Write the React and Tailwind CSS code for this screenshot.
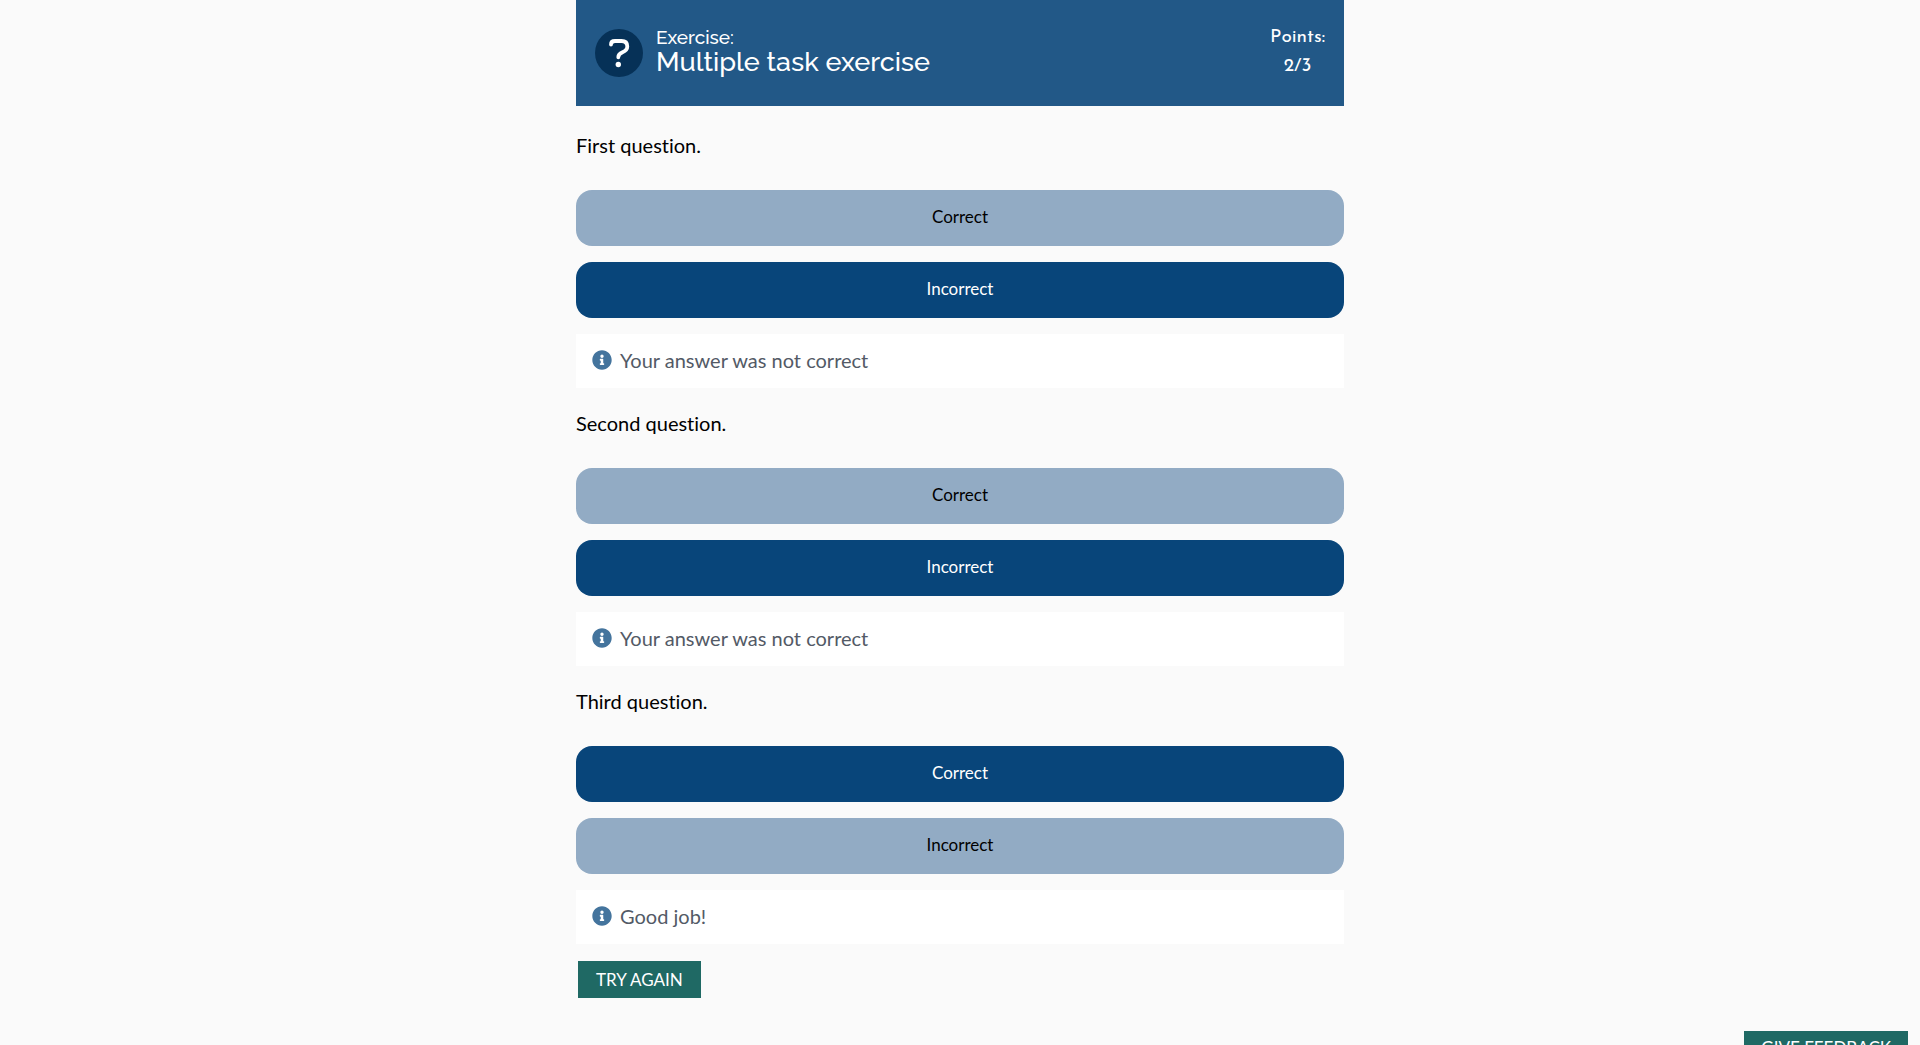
import { useState } from "react";
import { FaInfoCircle } from "react-icons/fa";

const questions = [
  { title: "First question.", chosen: "Incorrect", feedback: "Your answer was not correct" },
  { title: "Second question.", chosen: "Incorrect", feedback: "Your answer was not correct" },
  { title: "Third question.", chosen: "Correct", feedback: "Good job!" },
];

function QuestionMark() {
  return (
    <svg className="size-12 shrink-0" viewBox="0 0 48 48" aria-hidden="true">
      <circle cx="24" cy="24" r="24" fill="#063157" />
      <path
        d="M16 15.5C16 13 17.5 12 20 12H26.5C30.5 12 32.300 14.300 32.300 17.500C32.300 20.500 30.500 22 27.500 23.300C24.600 24.500 23.300 25.500 23.300 28.300"
        fill="none"
        stroke="#fff"
        strokeWidth="3.800"
        strokeLinecap="round"
      />
      <circle cx="23.300" cy="35.500" r="2.700" fill="#fff" />
    </svg>
  );
}

function Option({ label, selected, onSelect }) {
  return (
    <button
      type="button"
      aria-pressed={selected}
      onClick={onSelect}
      className={
        selected
          ? "h-14 w-full rounded-2xl bg-[#08457a] pb-0.5 text-[17px] text-white"
          : "h-14 w-full rounded-2xl bg-[#92abc4] pb-0.5 text-[17px] text-black"
      }
    >
      {label}
    </button>
  );
}

function Question({ title, chosen, feedback }) {
  const [selected, setSelected] = useState(chosen);
  return (
    <section className="pt-[19px]">
      <h2 className="mb-[29px] text-xl leading-8 text-black">{title}</h2>
      <div className="flex flex-col gap-4">
        {["Correct", "Incorrect"].map((label) => (
          <Option
            key={label}
            label={label}
            selected={selected === label}
            onSelect={() => setSelected(label)}
          />
        ))}
        <div className="flex items-center gap-2 bg-white px-4 py-3 text-xl leading-7 text-[#535a66]">
          <FaInfoCircle className="mb-0.5 size-5 text-[#44749d]" aria-hidden="true" />
          <p className="pb-0.5">{feedback}</p>
        </div>
      </div>
    </section>
  );
}

export default function App() {
  return (
    <div className="min-h-screen bg-[#fafafa] font-['Lato',sans-serif] [font-variant-ligatures:none]">
      <main className="mx-auto max-w-3xl">
        <header className="mb-1 flex items-center gap-[13px] bg-[#225887] px-[19px] py-[23px] text-white">
          <QuestionMark />
          <h1 className="grow pb-1 font-['Raleway','Lato',sans-serif] font-medium">
            <span className="block text-[19px] leading-[22px]">Exercise:</span>
            <span className="block text-[27px] leading-7">Multiple task exercise</span>
          </h1>
          <p className="pb-0.5 text-center font-['Josefin_Sans','Lato',sans-serif] text-[19px] leading-[29px]">
            Points:
            <br />
            2/3
          </p>
        </header>
        {questions.map((question) => (
          <Question key={question.title} {...question} />
        ))}
        <button
          type="button"
          className="mt-[17px] ml-0.5 h-[37px] bg-[#1f6964] px-[18px] text-[17px] text-white uppercase"
        >
          Try again
        </button>
      </main>
      <button
        type="button"
        className="fixed right-3 -bottom-6 h-[38px] bg-[#1f6964] px-[17px] pb-1 text-[17px] text-white uppercase"
      >
        Give feedback
      </button>
    </div>
  );
}
